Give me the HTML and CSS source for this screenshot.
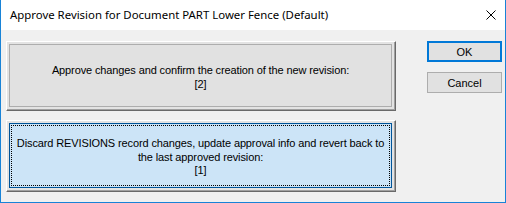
FILE: index.html
```html
<!DOCTYPE html>
<html>
<head>
<meta charset="utf-8">
<link rel="stylesheet" href="styles.css">
</head>
<body>
<div class="window">
  <div class="titlebar">
    <span class="title">Approve Revision for Document PART Lower Fence (Default)</span>
    <svg class="close" width="10" height="10" viewBox="0 0 10 10"><path d="M0.5 0.5 L9.5 9.5 M9.5 0.5 L0.5 9.5" stroke="#000" stroke-width="1" fill="none"/></svg>
  </div>
  <div class="client">
    <div class="choices">
      <div class="choice">
        <div class="face">
          <div class="label"><span class="line">Approve changes and confirm the creation of the new revision:</span><span class="line">[2]</span></div>
        </div>
      </div>
      <div class="choice selected">
        <div class="face">
          <div class="label"><span class="line">Discard REVISIONS record changes, update approval info and revert back to</span><span class="line">the last approved revision:</span><span class="line">[1]</span></div>
        </div>
      </div>
    </div>
    <div class="actions">
      <div class="btn default">OK</div>
      <div class="btn">Cancel</div>
    </div>
  </div>
</div>
</body>
</html>
```
FILE: styles.css
```css
html, body {
  margin: 0;
  padding: 0;
}
body {
  width: 506px;
  height: 203px;
  overflow: hidden;
  font-family: "Liberation Sans", Arial, sans-serif;
  font-size: 11px;
  color: #000;
}
.window {
  box-sizing: border-box;
  width: 506px;
  height: 203px;
  border: 1px solid #1883d7;
  border-top: none;
  display: flex;
  flex-direction: column;
  background: #f0f0f0;
}
.titlebar {
  height: 30px;
  background: #fff;
  display: flex;
  align-items: center;
  justify-content: space-between;
  padding: 0 9px 0 9px;
}
.title {
  font-family: "Noto Sans", "Open Sans", sans-serif;
  font-size: 11.4px;
  line-height: 16px;
}
.client {
  flex: 1;
  display: flex;
  padding: 11px 0 0 5px;
}
.choices {
  display: flex;
  flex-direction: column;
  gap: 9px;
  width: 390px;
}
.choice {
  box-sizing: border-box;
  height: 70px;
  border-top: 1px solid #fff;
  border-left: 1px solid #fff;
  border-right: 1px solid #696969;
  border-bottom: 1px solid #696969;
  background: #e3e3e3;
}
.face {
  box-sizing: border-box;
  height: 100%;
  border-right: 1px solid #a0a0a0;
  border-bottom: 1px solid #a0a0a0;
  padding: 2px;
}
.label {
  box-sizing: border-box;
  height: 100%;
  padding-top: 4px;
  border: 1px solid #adadad;
  background: #e1e1e1;
  display: flex;
  flex-direction: column;
  align-items: center;
  justify-content: center;
  text-align: center;
  letter-spacing: -0.12px;
}
.line {
  display: block;
  white-space: nowrap;
  line-height: 13.7px;
}
.choice.selected {
  height: 72px;
}
.choice.selected .label {
  border: 1px solid #005499;
  background: #cce4f7;
  outline: 1px dotted #000;
  outline-offset: -3px;
}
.actions {
  margin-left: 31px;
  display: flex;
  flex-direction: column;
  gap: 10px;
}
.btn {
  box-sizing: border-box;
  width: 75px;
  height: 21px;
  border: 1px solid #adadad;
  background: #e1e1e1;
  display: flex;
  align-items: center;
  justify-content: center;
}
.btn.default {
  border: 2px solid #0078d7;
}
```
